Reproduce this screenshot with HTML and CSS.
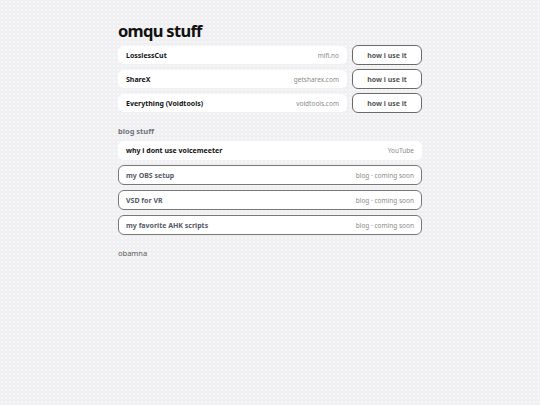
FILE: index.html
```html
<!DOCTYPE html>
<html lang="en">
<head>
    <meta charset="UTF-8">
    <meta name="viewport" content="width=device-width, initial-scale=1.0">
    <title>omqu stuff</title>
    <link rel="stylesheet" href="styles.css">
</head>
<body>
    <div class="page">
        <h1>omqu stuff</h1>

        <div class="tools">
            <div class="tool">
                <a class="card" href="#"><span class="name">LosslessCut</span><span class="site">mifi.no</span></a>
                <a class="how" href="#">how i use it</a>
            </div>
            <div class="tool">
                <a class="card" href="#"><span class="name">ShareX</span><span class="site">getsharex.com</span></a>
                <a class="how" href="#">how i use it</a>
            </div>
            <div class="tool">
                <a class="card" href="#"><span class="name">Everything (Voidtools)</span><span class="site">voidtools.com</span></a>
                <a class="how" href="#">how i use it</a>
            </div>
        </div>

        <h2>blog stuff</h2>

        <div class="posts">
            <a class="card first" href="#"><span class="name">why i dont use voicemeeter</span><span class="site">YouTube</span></a>
            <div class="card soon"><span class="name">my OBS setup</span><span class="site">blog · coming soon</span></div>
            <div class="card soon"><span class="name">VSD for VR</span><span class="site">blog · coming soon</span></div>
            <div class="card soon"><span class="name">my favorite AHK scripts</span><span class="site">blog · coming soon</span></div>
        </div>

        <p class="footer">obamna</p>
    </div>
</body>
</html>
```

FILE: styles.css
```css
*{
    margin: 0;
    padding: 0;
    box-sizing: border-box;
}
body{
    background-color: #f0f0f2;
    background-image: radial-gradient(#f7f7f8 0.8px, transparent 0.9px);
    background-size: 4px 4px;
    font-family: "Noto Sans", "Open Sans", sans-serif;
    color: #111;
}
a{
    color: inherit;
    text-decoration: none;
}
.page{
    width: 304px;
    margin: 0 auto;
    padding-top: 19px;
}
h1{
    font-size: 16.5px;
    line-height: 24px;
    font-weight: 700;
    letter-spacing: -0.7px;
    margin-bottom: 2px;
}
.tools{
    display: flex;
    flex-direction: column;
    gap: 4px;
}
.tool{
    display: grid;
    grid-template-columns: 1fr 70px;
    align-items: center;
    gap: 5px;
}
.card{
    display: flex;
    justify-content: space-between;
    align-items: center;
    height: 20px;
    padding: 0 7px;
    background: #fff;
    border: 1px solid transparent;
    border-radius: 6px;
}
.tool .card{
    height: 18px;
}
.name{
    font-size: 7px;
    font-weight: 700;
}
.site{
    font-size: 6.5px;
    color: #8a8a8a;
}
.how{
    display: flex;
    align-items: center;
    justify-content: center;
    height: 20px;
    border: 1px solid #6a6a6a;
    border-radius: 6px;
    background: #fff;
    font-size: 7px;
    font-weight: 700;
    color: #555;
}
h2{
    font-size: 7.5px;
    font-weight: 700;
    color: #6f7380;
    margin: 13px 0 5px;
}
.posts{
    display: flex;
    flex-direction: column;
    gap: 5px;
}
.posts .first{
    height: 19px;
}
.soon{
    border-color: #777;
}
.soon .name{
    color: #555a66;
}
.footer{
    font-size: 7.5px;
    font-weight: 400;
    color: #5a5a5a;
    margin-top: 13px;
}
```
